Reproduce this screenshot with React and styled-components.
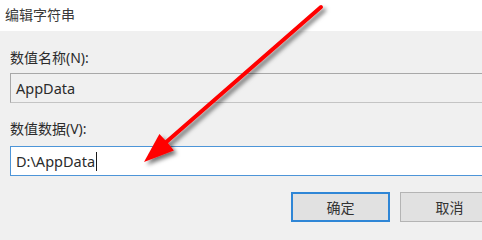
import React from 'react'
import styled, { createGlobalStyle } from 'styled-components'

const GlobalStyle = createGlobalStyle`
  html, body {
    margin: 0;
    padding: 0;
    overflow: hidden;
    background: #f0f0f0;
  }
  body {
    font-family: "Noto Sans", "Noto Sans CJK SC", sans-serif;
  }
`

// the dialog is wider than the shot, its right side is cut off
const Dialog = styled.div`
  position: relative;
  width: 482px;
  height: 229px;
  overflow: hidden;
  background: #f0f0f0;
  color: #2b2b2b;
  font-size: 14px;
`

const TitleBar = styled.div`
  height: 31px;
  background: #ffffff;
  display: flex;
  align-items: center;
  padding: 0 0 4px 5px;
  box-sizing: border-box;
  color: #3a3a3a;
`

const Body = styled.div`
  width: 509px;
  box-sizing: border-box;
  display: flex;
  flex-direction: column;
  padding: 0 10px;
`

const Label = styled.div`
  height: 18px;
  line-height: 18px;
  margin-top: ${({ $top }) => $top}px;
  margin-bottom: ${({ $bottom }) => $bottom}px;
`

const Field = styled.div`
  height: 30px;
  box-sizing: border-box;
  display: flex;
  align-items: center;
  padding: 0 5px;
  font-size: 14.5px;
  border: 1px solid ${({ $focused }) => ($focused ? '#4d95d8' : '#a8a8a8')};
  border-bottom-color: ${({ $focused }) => ($focused ? '#4d95d8' : '#c4c4c4')};
  background: ${({ $focused }) => ($focused ? '#ffffff' : '#f0f0f0')};
`

const Caret = styled.span`
  display: inline-block;
  width: 1px;
  height: 19px;
  margin-left: 1px;
  background: #1a1a1a;
`

const Buttons = styled.div`
  display: flex;
  justify-content: flex-end;
  gap: 10px;
  margin-top: 16px;
`

const Button = styled.div`
  width: 99px;
  height: 30px;
  box-sizing: border-box;
  display: flex;
  align-items: center;
  justify-content: center;
  background: #e1e1e1;
  border: ${({ $primary }) => ($primary ? '2px solid #2f86d6' : '1px solid #b4b4b4')};
  color: #333;
`

const Arrow = styled.svg`
  position: absolute;
  left: 0;
  top: 0;
  pointer-events: none;
`

export default function App() {
  return (
    <>
      <GlobalStyle />
      <Dialog>
        <TitleBar>编辑字符串</TitleBar>
        <Body>
          <Label $top={18} $bottom={6}>数值名称(N):</Label>
          <Field>AppData</Field>
          <Label $top={17} $bottom={8}>数值数据(V):</Label>
          <Field $focused>
            D:\AppData
            <Caret />
          </Field>
          <Buttons>
            <Button $primary>确定</Button>
            <Button>取消</Button>
          </Buttons>
        </Body>
        <Arrow width="482" height="229" viewBox="0 0 482 229">
          <defs>
            <filter id="shadow" x="-20%" y="-20%" width="140%" height="140%">
              <feDropShadow dx="3" dy="3" stdDeviation="2.2" floodColor="#000" floodOpacity="0.55" />
            </filter>
          </defs>
          <g filter="url(#shadow)">
            <line x1="321" y1="7" x2="164" y2="144" stroke="#ff0000" strokeWidth="4" strokeLinecap="round" />
            <polygon points="144,162 159.4,133.9 167,142 173.9,150.5" fill="#ff0000" />
          </g>
        </Arrow>
      </Dialog>
    </>
  )
}
